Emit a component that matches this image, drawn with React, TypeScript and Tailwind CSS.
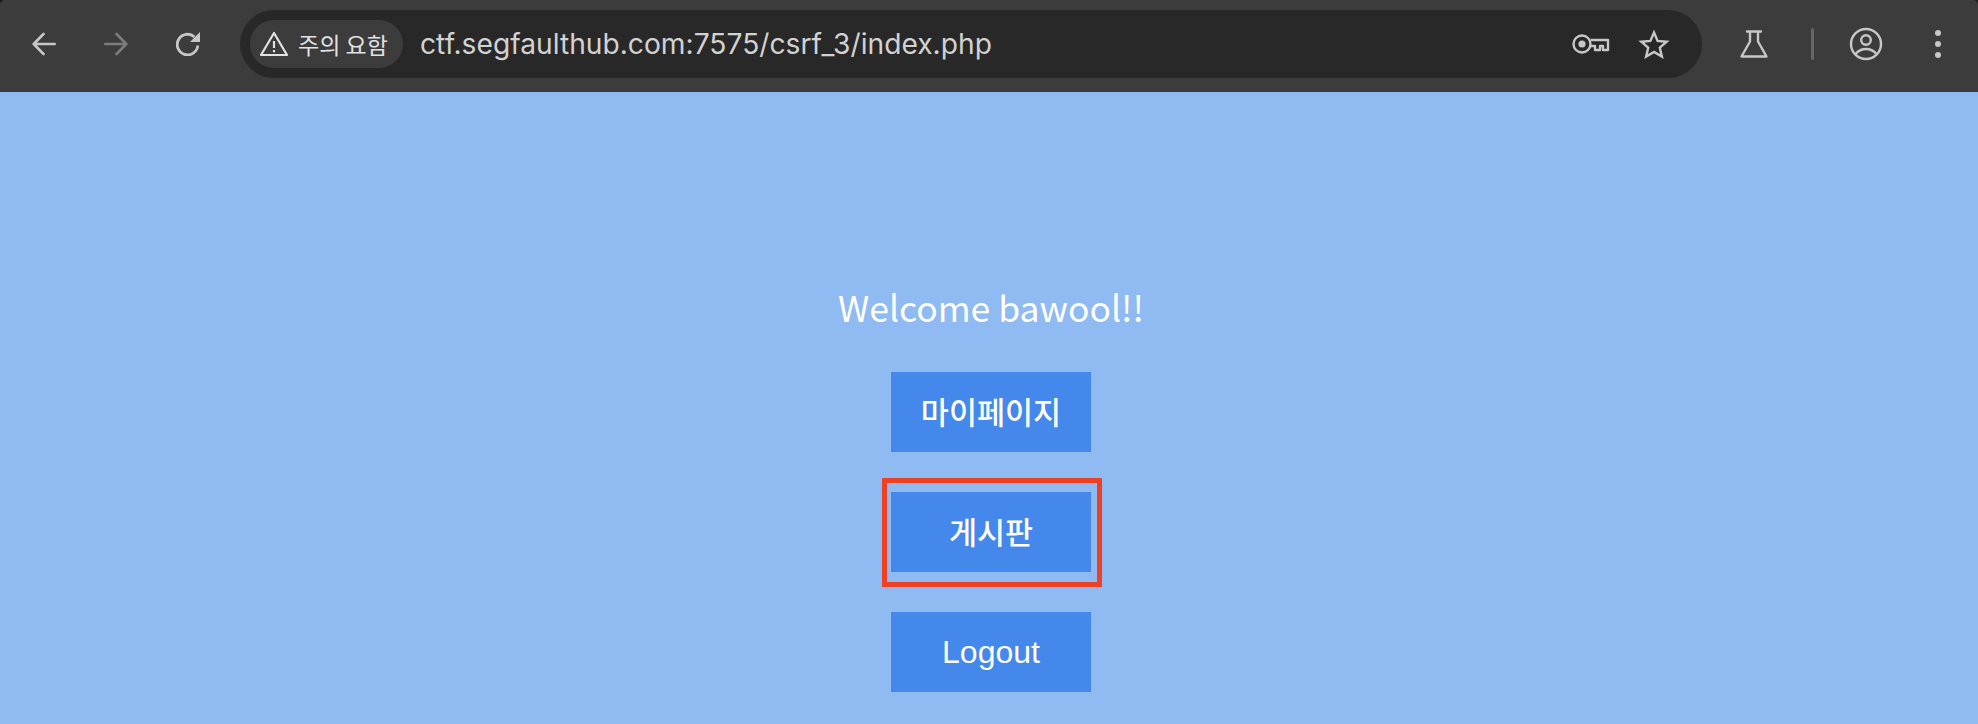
import React from "react";

const BackIcon = () => (
  <svg width="24" height="24" viewBox="0 0 24 24" fill="none" stroke="#c7c7c7" strokeWidth="2.6" strokeLinecap="round" strokeLinejoin="round">
    <path d="M22.700 12H2M11.500 2 1.700 12l9.800 10" />
  </svg>
);

const ForwardIcon = () => (
  <svg width="24" height="24" viewBox="0 0 24 24" fill="none" stroke="#7c7c7c" strokeWidth="2.6" strokeLinecap="round" strokeLinejoin="round">
    <path d="M1.300 12H22M12.500 2l9.800 10-9.800 10" />
  </svg>
);

const ReloadIcon = () => (
  <svg width="24" height="24" viewBox="0 0 24 24" fill="none" stroke="#c7c7c7" strokeWidth="2.800">
    <path d="M21.800 13.500A10.300 10.300 0 1 1 18.500 5" />
    <path d="M24 0V10H14Z" fill="#c7c7c7" stroke="none" />
  </svg>
);

const WarnIcon = () => (
  <svg width="30" height="26" viewBox="0 0 30 26" fill="none" stroke="#e2e2e2" strokeWidth="2.200" strokeLinejoin="round">
    <path d="M15 2 28 24H2Z" />
    <path d="M15 10v7M15 19v2.200" />
  </svg>
);

const KeyIcon = () => (
  <svg width="38" height="22" viewBox="0 0 38 22" fill="none" stroke="#c7c7c7" strokeWidth="2.400" strokeLinejoin="round">
    <circle cx="10" cy="11" r="8.500" />
    <circle cx="10" cy="11" r="3.600" fill="#c7c7c7" stroke="none" />
    <path d="M18.500 7H36v10h-5v-4h-3v4h-5v-4h-4.500" />
  </svg>
);

const StarIcon = () => (
  <svg width="32" height="30" viewBox="0 0 32 30" fill="none" stroke="#c7c7c7" strokeWidth="2.400">
    <path d="M16 3.500l3.600 8.400 9.100.8-6.900 6 2.100 8.900-7.900-4.700-7.900 4.700 2.100-8.900-6.900-6 9.100-.8z" />
  </svg>
);

const FlaskIcon = () => (
  <svg width="30" height="30" viewBox="0 0 30 30" fill="none" stroke="#c7c7c7" strokeWidth="2.400" strokeLinecap="round" strokeLinejoin="round">
    <path d="M8 2.500h14M11 3v9.500L2.500 27.500h25L19 12.500V3" />
  </svg>
);

const ProfileIcon = () => (
  <svg width="34" height="34" viewBox="0 0 34 34" fill="none" stroke="#c7c7c7" strokeWidth="2.400">
    <circle cx="17" cy="17" r="15" />
    <circle cx="17" cy="13" r="4.800" />
    <path d="M6.500 27c3-3.500 6.500-5 10.500-5s7.500 1.500 10.500 5" />
  </svg>
);

const DotsIcon = () => (
  <svg width="8" height="30" viewBox="0 0 8 30" fill="#c7c7c7">
    <circle cx="4" cy="4" r="3" />
    <circle cx="4" cy="15" r="3" />
    <circle cx="4" cy="26" r="3" />
  </svg>
);

const korean = "font-['Noto_Sans_CJK_KR','Noto_Sans',sans-serif]";

const MenuButton = ({ label, latin = false }: { label: string; latin?: boolean }) => (
  <button
    className={`w-[200px] h-[80px] bg-[#4388ea] text-white flex items-center justify-center ${
      latin ? "font-['Liberation_Sans',sans-serif] text-[32px]" : `${korean} text-[30.500px] font-medium`
    }`}
  >
    {label}
  </button>
);

export default function App() {
  return (
    <div className="h-[724px] overflow-hidden bg-[#1c1c1c] flex flex-col">
      <header className="h-[92px] shrink-0 bg-[#3c3c3c] rounded-t-[5px] flex items-center pb-[4px]">
        <div className="w-[240px] shrink-0 flex items-center pl-[32px] gap-[48px]">
          <BackIcon />
          <ForwardIcon />
          <ReloadIcon />
        </div>
        <div className="w-[1462px] h-[68px] rounded-full bg-[#282828] flex items-center pl-[10px] pr-[32px]">
          <div className={`w-[153px] h-[48px] rounded-full bg-[#3c3c3c] flex items-center pl-[9px] gap-[9px] text-[#e2e2e2] text-[23px] ${korean}`}>
            <WarnIcon />
            <span>주의 요함</span>
          </div>
          <span className="ml-[17px] text-[#d2d2d2] text-[28.200px] font-['Inter',sans-serif]">
            ctf.segfaulthub.com:7575/csrf_3/index.php
          </span>
          <div className="ml-auto flex items-center gap-[28px]">
            <KeyIcon />
            <StarIcon />
          </div>
        </div>
        <div className="flex-1 flex items-center pl-[37px]">
          <FlaskIcon />
          <div className="ml-[42px] w-[3px] h-[32px] rounded-full bg-[#666666]" />
          <div className="ml-[35px]">
            <ProfileIcon />
          </div>
          <div className="ml-[51px]">
            <DotsIcon />
          </div>
        </div>
      </header>
      <main className="flex-1 bg-[#8fbaf2] flex flex-col items-center pt-[191px] pl-[4px]">
        <h1 className={`text-white text-[35.500px] leading-[48px] font-normal mb-[41px] ${korean}`}>Welcome bawool!!</h1>
        <div className="flex flex-col gap-[40px]">
          <MenuButton label="마이페이지" />
          <div className="relative">
            <MenuButton label="게시판" />
            <div className="absolute left-[-9px] top-[-14px] w-[220px] h-[109px] border-[5px] border-[#ee4023]" />
          </div>
          <MenuButton label="Logout" latin />
        </div>
      </main>
    </div>
  );
}
